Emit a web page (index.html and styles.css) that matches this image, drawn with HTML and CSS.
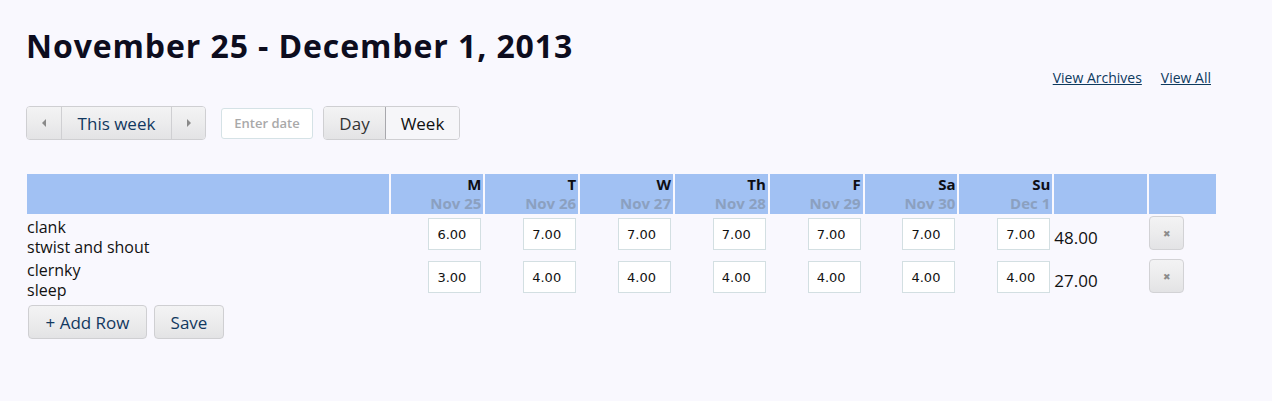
FILE: index.html
```html
<!DOCTYPE html>
<html>
<head>
<meta charset="utf-8">
<link rel="stylesheet" href="styles.css">
</head>
<body>
<div class="page">
  <h1 class="title">November 25 - December 1, 2013</h1>
  <div class="links">
    <a href="#" class="link">View Archives</a>
    <a href="#" class="link">View All</a>
  </div>
  <div class="toolbar">
    <div class="group">
      <button class="btn arrow"><svg width="6" height="8" viewBox="0 0 6 8"><path d="M5 0 L1 4 L5 8 Z" fill="#8a8a8a"/></svg></button>
      <button class="btn thisweek">This week</button>
      <button class="btn arrow"><svg width="6" height="8" viewBox="0 0 6 8"><path d="M1 0 L5 4 L1 8 Z" fill="#8a8a8a"/></svg></button>
    </div>
    <input class="date" type="text" placeholder="Enter date">
    <div class="group">
      <button class="btn day">Day</button>
      <button class="btn week active">Week</button>
    </div>
  </div>
  <table class="sheet">
    <thead>
      <tr>
        <th class="c-name"></th>
        <th class="c-day"><div class="dn">M</div><div class="dd">Nov 25</div></th>
        <th class="c-day"><div class="dn">T</div><div class="dd">Nov 26</div></th>
        <th class="c-day"><div class="dn">W</div><div class="dd">Nov 27</div></th>
        <th class="c-day"><div class="dn">Th</div><div class="dd">Nov 28</div></th>
        <th class="c-day"><div class="dn">F</div><div class="dd">Nov 29</div></th>
        <th class="c-day"><div class="dn">Sa</div><div class="dd">Nov 30</div></th>
        <th class="c-day"><div class="dn">Su</div><div class="dd">Dec 1</div></th>
        <th class="c-total"></th>
        <th class="c-del"></th>
      </tr>
    </thead>
    <tbody>
      <tr>
        <td class="name">clank<br>stwist and shout</td>
        <td class="cell"><input class="hours" value="6.00"></td>
        <td class="cell"><input class="hours" value="7.00"></td>
        <td class="cell"><input class="hours" value="7.00"></td>
        <td class="cell"><input class="hours" value="7.00"></td>
        <td class="cell"><input class="hours" value="7.00"></td>
        <td class="cell"><input class="hours" value="7.00"></td>
        <td class="cell"><input class="hours" value="7.00"></td>
        <td class="total">48.00</td>
        <td class="del"><button class="btn x">&#x2716;</button></td>
      </tr>
      <tr>
        <td class="name">clernky<br>sleep</td>
        <td class="cell"><input class="hours" value="3.00"></td>
        <td class="cell"><input class="hours" value="4.00"></td>
        <td class="cell"><input class="hours" value="4.00"></td>
        <td class="cell"><input class="hours" value="4.00"></td>
        <td class="cell"><input class="hours" value="4.00"></td>
        <td class="cell"><input class="hours" value="4.00"></td>
        <td class="cell"><input class="hours" value="4.00"></td>
        <td class="total">27.00</td>
        <td class="del"><button class="btn x">&#x2716;</button></td>
      </tr>
    </tbody>
  </table>
  <div class="actions">
    <button class="btn act">+ Add Row</button>
    <button class="btn act">Save</button>
  </div>
</div>
</body>
</html>
```
FILE: styles.css
```css
html, body {
  margin: 0;
  padding: 0;
  background: #f9f8fe;
}
body {
  font-family: "Open Sans", "Noto Sans", sans-serif;
  color: #111;
}
.page {
  padding: 26px 0 0 26px;
  width: 1192px;
}
.title {
  margin: 0;
  font-family: "Open Sans", sans-serif;
  font-weight: 700;
  font-size: 32px;
  line-height: 40px;
  letter-spacing: 0.9px;
  color: #0d0d1e;
}
.links {
  display: flex;
  justify-content: flex-end;
  gap: 19px;
  padding-right: 7px;
  margin-top: 2px;
  height: 20px;
}
.link {
  font-family: "Open Sans", sans-serif;
  font-size: 14px;
  line-height: 20px;
  color: #0e3a5e;
  text-decoration: underline;
}
.toolbar {
  display: flex;
  align-items: center;
  gap: 15px;
  margin-top: 18px;
}
.toolbar .date + .group { margin-left: -5px; }
.group {
  display: flex;
  border: 1px solid #cfcfd2;
  border-radius: 4px;
  overflow: hidden;
}
.btn {
  font-family: "Open Sans", sans-serif;
  background: linear-gradient(#f3f3f4 0%, #ececed 50%, #e3e3e5 100%);
  border: 0;
  margin: 0;
  color: #12385f;
  cursor: pointer;
  padding: 0;
}
.group .btn {
  height: 32px;
  font-size: 17px;
  border-left: 1px solid #cfcfd2;
}
.group .btn:first-child { border-left: 0; }
.arrow {
  width: 34px;
  display: flex;
  align-items: center;
  justify-content: center;
}
.thisweek { width: 110px; }
.day { width: 61px; color: #333; }
.week { width: 74px; }
.week.active {
  background: #f6f6f9;
  color: #111;
  border-left: 1px solid #a8a8ad !important;
}
.date {
  width: 92px;
  height: 31px;
  box-sizing: border-box;
  border: 1px solid #d5e2e6;
  border-radius: 3px;
  background: #fff;
  font-family: "Open Sans", sans-serif;
  font-size: 13px;
  font-weight: 600;
  text-align: center;
  padding: 0;
}
.date::placeholder { color: #a9a9a9; }
.sheet {
  border-collapse: separate;
  border-spacing: 2px 0;
  margin-top: 34px;
  margin-left: -1px;
}
.sheet th {
  background: #a1c1f3;
  height: 40px;
  padding: 0 2px 0 0;
  text-align: right;
  vertical-align: bottom;
  font-weight: 700;
  font-size: 15px;
  line-height: 19px;
}
.c-name { width: 361px; }
.c-day { width: 91px; }
.c-total { width: 91px; }
.c-del { width: 65px; }
.dn { color: #0e0e14; }
.dd { color: #8ba0c0; padding-bottom: 1px; }
.sheet td {
  padding: 3px 0 0 0;
  vertical-align: top;
}
.name {
  font-size: 16px;
  line-height: 20px;
}
.cell { padding-right: 2px !important; }
.hours {
  display: block;
  margin: 1px 0 0 auto;
  width: 53px;
  height: 32px;
  box-sizing: border-box;
  border: 1px solid #d3dfe2;
  background: #fff;
  font-family: "DejaVu Sans", sans-serif;
  font-size: 13px;
  padding: 0 0 0 8px;
  color: #111;
}
.total {
  font-size: 17px;
  line-height: 23px;
  padding-top: 12px !important;
}
.x {
  display: block;
  width: 35px;
  height: 34px;
  margin-top: -1px;
  border: 1px solid #d2d2d5;
  border-radius: 4px;
  color: #8c8c8c;
  font-size: 9px;
}
.actions {
  display: flex;
  gap: 7px;
  margin-left: 2px;
  margin-top: 5px;
}
.act {
  height: 34px;
  border: 1px solid #cfcfd2;
  border-radius: 4px;
  font-size: 17px;
}
.act:first-child { width: 119px; }
.act:last-child { width: 70px; }
```
